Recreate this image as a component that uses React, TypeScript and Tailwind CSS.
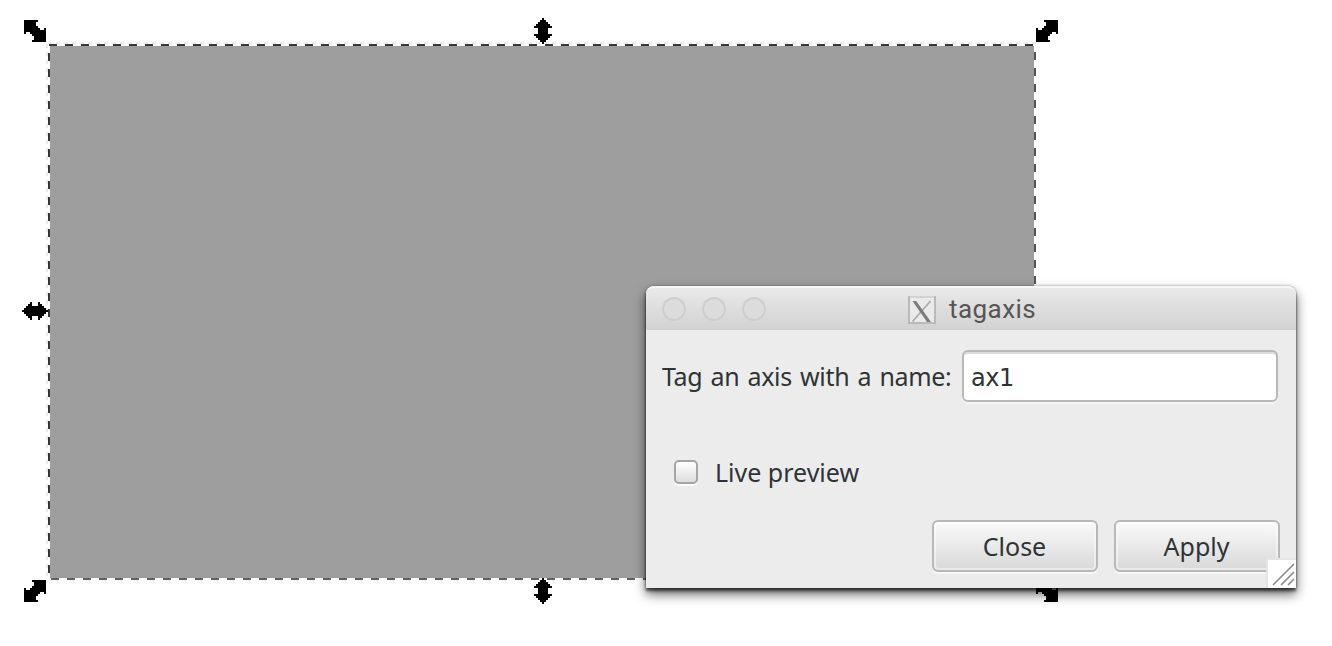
import React from "react";

const DIAGONAL = "0,0 7,0 7,1 6,1 6,3 7,3 7,4 8,4 8,5 10,5 10,4 11,4 11,11 4,11 4,10 5,10 5,8 4,8 4,7 3,7 3,6 1,6 1,7 0,7";
const ARROW_ROWS = [1, 3, 5, 7, 9, 5, 5, 5, 9, 7, 5, 3, 1];

function DiagonalHandle({ x, y, flip = false }: { x: number; y: number; flip?: boolean }) {
  return (
    <polygon
      points={DIAGONAL}
      transform={flip ? `translate(${x + 22} ${y}) scale(-2 2)` : `translate(${x} ${y}) scale(2)`}
    />
  );
}

function StraightHandle({ x, y, horizontal = false }: { x: number; y: number; horizontal?: boolean }) {
  return (
    <g>
      {ARROW_ROWS.map((w, i) =>
        horizontal ? (
          <rect key={i} x={x - 13 + i * 2} y={y - w} width={2} height={w * 2} />
        ) : (
          <rect key={i} x={x - w} y={y - 13 + i * 2} width={w * 2} height={2} />
        ),
      )}
    </g>
  );
}

function Canvas() {
  return (
    <svg className="block h-[646px] w-[1332px]" viewBox="0 0 1332 646" shapeRendering="crispEdges">
      <g stroke="#ebebeb" strokeWidth="2" strokeDasharray="4 4">
        <path d="M48 43H1036" />
        <path d="M47 44V578" />
      </g>
      <rect x="48" y="44" width="988" height="536" fill="#ffffff" />
      <rect x="50" y="46" width="984" height="532" fill="#9e9e9e" />
      <g stroke="#363636" strokeWidth="2" strokeDasharray="8 8">
        <path d="M49 45H1036" />
        <path d="M49 53V578" />
        <path d="M1035 52V578" stroke="#555555" />
        <path d="M51 579H1034" stroke="#606060" />
      </g>
      <DiagonalHandle x={24} y={20} />
      <DiagonalHandle x={1036} y={20} flip />
      <DiagonalHandle x={24} y={580} flip />
      <DiagonalHandle x={1036} y={580} />
      <StraightHandle x={543} y={31} />
      <StraightHandle x={543} y={591} />
      <StraightHandle x={35} y={311} horizontal />
    </svg>
  );
}

function XIcon() {
  return (
    <svg className="size-7" viewBox="0 0 28 28">
      <rect x="1" y="1" width="26" height="26" fill="#eaeaea" stroke="#bababa" strokeWidth="2" />
      <path d="M2 1h24" stroke="#d2d2d2" strokeWidth="2" />
      <path d="M22.5 5L4.5 25.5" stroke="#ababab" strokeWidth="1.8" />
      <path d="M4.5 5h3.7L23 26h-4z" fill="#7c7c7c" />
    </svg>
  );
}

function TitleBar() {
  return (
    <header className="relative flex h-11 items-center rounded-t-lg border-t-2 border-[#f6f6f6] bg-linear-to-b from-[#e9e9e9] to-[#d2d2d2]">
      <div className="flex gap-4 pl-4">
        {["close", "minimise", "zoom"].map((name) => (
          <span key={name} className="size-6 rounded-full border-2 border-[#cecece] bg-[#dcdcdc]" />
        ))}
      </div>
      <div className="ml-[142px] flex items-center gap-[13px] pt-0.5">
        <XIcon />
        <h1 className="-mt-0.5 font-['Roboto',sans-serif] text-[26px] leading-10 tracking-[0.45px] text-[#555555]">tagaxis</h1>
      </div>
    </header>
  );
}

function DialogButton({ children }: { children: React.ReactNode }) {
  return (
    <button className="h-[52px] w-[166px] rounded-md border-2 border-[#b6b9b6] bg-linear-to-b from-[#fafafa] to-[#d9d9d9] pt-0.5 pr-px shadow-[inset_0_0_0_2px_#ffffff70,0_2px_0_#f8f8f8]">
      {children}
    </button>
  );
}

function Dialog() {
  return (
    <section className="absolute top-[286px] left-[646px] h-[302px] w-[650px] rounded-t-lg bg-[#ececec] font-['Noto_Sans',sans-serif] text-[25px] text-[#2e3436] shadow-[0_0_2px_#00000070,0_3px_3px_#00000090,0_6px_12px_#000000a0]">
      <TitleBar />
      <div className="flex items-center pt-5 pl-4">
        <label htmlFor="axis-name" className="w-[300px] pt-0.5 whitespace-nowrap [word-spacing:2.1px] tracking-[-0.35px]">
          Tag an axis with a name:
        </label>
        <input
          id="axis-name"
          defaultValue="ax1"
          className="h-[52px] w-[316px] rounded-md border-2 border-[#b6b9b6] bg-white pt-[3px] pl-[7px] font-['DejaVu_Sans',sans-serif] text-[24px] tracking-[-0.5px] shadow-[inset_0_2px_0_#dddddd,0_2px_0_#f3f3f3] outline-none"
        />
      </div>
      <label className="mt-[52px] flex h-9 items-center pl-7">
        <span className="size-6 rounded-[5px] border-2 border-[#a5a5a5] bg-linear-to-b from-white to-[#dddddd] shadow-[0_2px_0_#fafafa]" />
        <span className="ml-[17px] pt-0.5">Live preview</span>
      </label>
      <div className="mt-[30px] flex justify-end gap-4 pr-4">
        <DialogButton>Close</DialogButton>
        <DialogButton>Apply</DialogButton>
      </div>
      <svg className="absolute right-0 bottom-0 h-[30px] w-[30px]" viewBox="0 0 30 30">
        <path d="M0 0h30v30H0z" fill="#e5e5e5" />
        <path d="M2 2h28v28H2z" fill="#ffffff" />
        <path d="M7 27L28 6M15 27L28 14M22 27l6-6" stroke="#8a8a8a" strokeWidth="1.6" />
      </svg>
    </section>
  );
}

export default function App() {
  return (
    <main className="relative h-[646px] w-[1332px] overflow-hidden bg-white">
      <Canvas />
      <Dialog />
    </main>
  );
}
